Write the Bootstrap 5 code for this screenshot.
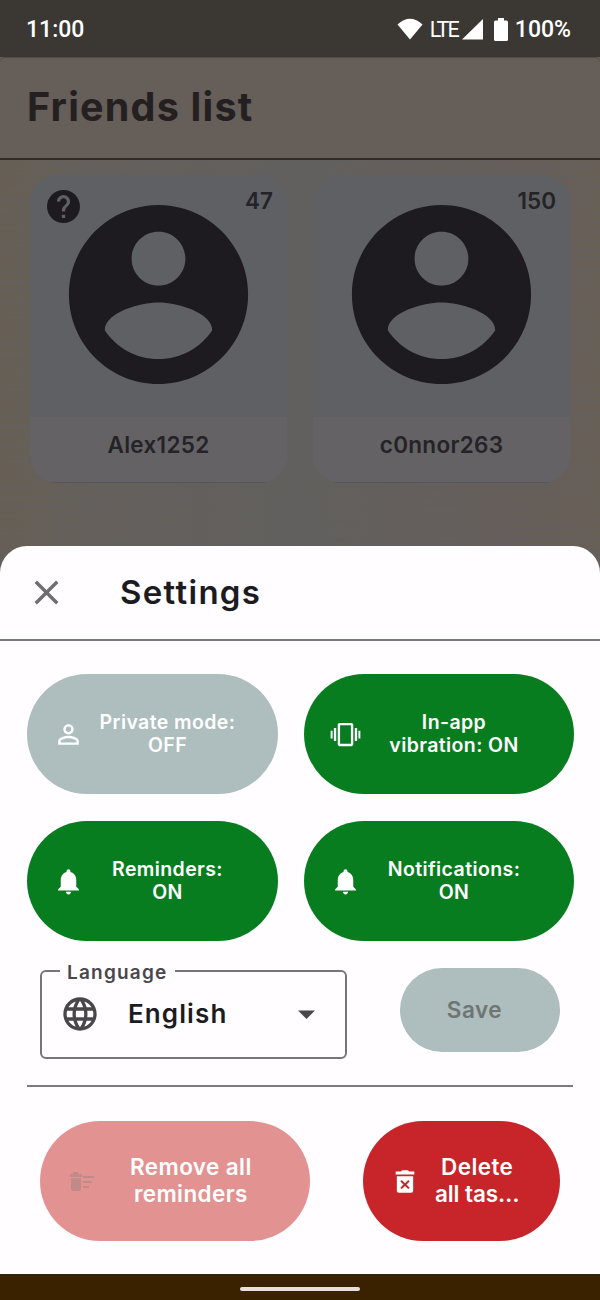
<!DOCTYPE html>
<html lang="en">
<head>
<meta charset="utf-8">
<meta name="viewport" content="width=device-width, initial-scale=1">
<title>Friends list – Settings</title>
<link href="https://cdn.jsdelivr.net/npm/bootstrap@5.3.0/dist/css/bootstrap.min.css" rel="stylesheet">
<style>
body{font-family:Inter,"Open Sans",sans-serif;font-weight:600;background:#665f59;color:#1c1b1f}
.screen{width:600px;height:1300px;overflow:hidden}
.screen svg{display:block;flex:none}
.statusbar{height:57px;background:#3b3833;color:#fff;font:500 23px/30px Roboto,sans-serif;padding:3px 29px 0 26px}
.lte{font-weight:400;font-size:21.5px;letter-spacing:-1.9px}
.wifi{margin-bottom:3px;margin-right:-1px}
.signal,.battery{margin-bottom:2px}
.battery{margin-left:11px;margin-right:7px}
.appbar{height:103px;padding:0 27px;background:#655e59;border-top:1px solid #514b47;border-bottom:2px solid #312c2a;border-radius:5px 5px 0 0}
.appbar h1{font-size:39.5px;font-weight:700;letter-spacing:1.2px;line-height:50px;color:#242021;margin:0 0 2px}
.friends{height:386px;padding:15px 30px 0;gap:26px;background:repeating-linear-gradient(179.5deg,#60616400 0 3px,#60616455 4px 5px,#60616400 6px 9px),linear-gradient(90deg,#675f55,#65605a 12%,#62605e 50%,#665e59 88%,#685f57)}
.friend{width:257px;height:308px;border-radius:27px;background:#5f6064;overflow:hidden;color:#242327;font-size:22.5px;line-height:28px}
.friend .top-line{height:30px;padding:12px 14px 0 17px}
.friend .top-line svg{margin-top:3px}
.friend .avatar{margin:-18px auto 0}
.friend .who{height:66px;background:#646265;padding-bottom:10px;letter-spacing:.3px;border-bottom:1px solid #55555c}
.sheet{height:728px;background:#fffdff;border-radius:27px 27px 0 0}
.sheet-head{height:95px;border-bottom:2px solid #7b7a7c;padding:0 0 1px 26px}
.sheet-head h2{font-size:33px;line-height:40px;font-weight:600;letter-spacing:1.3px;margin:0 0 1px 53px}
.opts{display:grid;grid-template-columns:251px 270px;gap:27px 26px;padding:33px 0 0 26.5px}
.pill{height:120px;border-radius:60px;border:0;color:#fff;display:flex;align-items:center;font-weight:600}
.opts .pill{font-size:19.5px;line-height:23.5px;letter-spacing:.4px;padding:0 26px 0 26px}
.opts .pill span{flex:1;text-align:center}
.green{background:#087d20}
.muted{background:#aebdbd}
.lang-row{padding:27px 40px 0;height:144px}
.lang{width:307px;height:92px;border:2px solid #777579;border-radius:6px;margin:-1px 0 0;padding:0 20px 5px 18px;color:#1c1b1f}
.lang legend{float:none;width:auto;margin:0;padding:0 8px 0 7px;font-size:19px;line-height:12px;height:8px;letter-spacing:1.2px;color:#49474b}
.lang .val{font-size:26px;letter-spacing:1.1px;margin-left:28px}
.lang .caret{margin-right:2px}
.save{width:160px;height:84px;border-radius:42px;color:#6e7574;font-size:22.5px;letter-spacing:.5px;padding:0 11px 1px 0;justify-content:center}
.rule{height:2px;background:#7b7a7c;margin:0 27px}
.danger-row{padding:34px 40px 0}
.danger-row .pill{font-size:22.5px;line-height:27px;letter-spacing:.4px;padding-bottom:0}
.danger-row .pill span{text-align:center;margin-bottom:4px}
.remove{width:270px;background:#e39292;padding-left:29px}
.remove span{margin-left:35px}
.delete{width:197px;background:#c72529;padding-left:28px}
.delete .label-text{margin-left:16px;white-space:nowrap}
.delete .tight{letter-spacing:-.1px}
.navbtm{height:26px;background:#3a2200;border-top:1px solid #292719}
.handle{width:120px;height:4px;border-radius:2px;background:#e8dedb;margin-top:3px}
</style>
</head>
<body>
<div class="screen d-flex flex-column">
  <div class="statusbar d-flex align-items-center">
    <span class="me-auto">11:00</span>
    <svg class="wifi" width="26" height="22" viewBox="0 0 26 22" fill="#fff"><path d="M0.500 6.500Q13-5 25.500 6.500L13 21.500z"/></svg>
    <span class="lte ms-2">LTE</span>
    <svg class="signal ms-1" width="21" height="22" viewBox="0 0 21 22"><path d="M0 21.500 21 1V21.500z" fill="#fff"/></svg>
    <svg class="battery" width="14" height="23" viewBox="0 0 14 23" fill="#fff"><path d="M4 0h6v2.500h2.500a1.500 1.500 0 0 1 1.500 1.500v17.500a1.500 1.500 0 0 1-1.500 1.500h-11A1.500 1.500 0 0 1 0 21.500V4a1.500 1.500 0 0 1 1.500-1.500H4z"/></svg>
    <span>100%</span>
  </div>
  <header class="appbar d-flex align-items-center"><h1>Friends list</h1></header>
  <main class="friends d-flex align-items-start">
    <div class="friend d-flex flex-column">
      <div class="top-line d-flex justify-content-between align-items-start">
        <svg width="33" height="33" viewBox="2 2 20 20" fill="#1d1b20"><path d="M12 2C6.480 2 2 6.480 2 12s4.480 10 10 10 10-4.480 10-10S17.520 2 12 2zm1 17h-2v-2h2v2zm2.070-7.750-.9.920C13.450 12.900 13 13.500 13 15h-2v-.5c0-1.100.450-2.100 1.170-2.830l1.240-1.260c.370-.360.590-.860.590-1.410 0-1.100-.9-2-2-2s-2 .9-2 2H8c0-2.210 1.790-4 4-4s4 1.790 4 4c0 .880-.360 1.680-.930 2.250z"/></svg>
        <span>47</span>
      </div>
      <svg class="avatar" width="215" height="215" viewBox="0 0 24 24" fill="#1d1b20"><path d="M12 2C6.480 2 2 6.480 2 12s4.480 10 10 10 10-4.480 10-10S17.520 2 12 2zm0 3c1.660 0 3 1.340 3 3s-1.340 3-3 3-3-1.340-3-3 1.340-3 3-3zm0 14.200c-2.500 0-4.710-1.280-6-3.220.030-1.990 4-3.080 6-3.080 1.990 0 5.970 1.090 6 3.080-1.290 1.940-3.500 3.220-6 3.220z"/></svg>
      <div class="who mt-auto d-flex align-items-center justify-content-center">Alex1252</div>
    </div>
    <div class="friend d-flex flex-column">
      <div class="top-line d-flex justify-content-end align-items-start"><span>150</span></div>
      <svg class="avatar" width="215" height="215" viewBox="0 0 24 24" fill="#1d1b20"><path d="M12 2C6.480 2 2 6.480 2 12s4.480 10 10 10 10-4.480 10-10S17.520 2 12 2zm0 3c1.660 0 3 1.340 3 3s-1.340 3-3 3-3-1.340-3-3 1.340-3 3-3zm0 14.200c-2.500 0-4.710-1.280-6-3.220.030-1.990 4-3.080 6-3.080 1.990 0 5.970 1.090 6 3.080-1.290 1.940-3.500 3.220-6 3.220z"/></svg>
      <div class="who mt-auto d-flex align-items-center justify-content-center">c0nnor263</div>
    </div>
  </main>
  <section class="sheet">
    <div class="sheet-head d-flex align-items-center">
      <svg width="41" height="41" viewBox="0 0 24 24" fill="#6f6d70"><path d="M19 6.410 17.590 5 12 10.590 6.410 5 5 6.410 10.590 12 5 17.590 6.410 19 12 13.410 17.590 19 19 17.590 13.410 12z"/></svg>
      <h2>Settings</h2>
    </div>
    <div class="opts">
      <button class="pill muted"><svg width="31" height="31" viewBox="0 0 24 24" fill="#fff"><path d="M12 5.900a2.100 2.100 0 1 1 0 4.200 2.100 2.100 0 0 1 0-4.200m0 9c2.970 0 6.100 1.460 6.100 2.100v1.100H5.900V17c0-.640 3.130-2.100 6.100-2.100M12 4C9.790 4 8 5.790 8 8s1.790 4 4 4 4-1.790 4-4-1.790-4-4-4zm0 9c-2.670 0-8 1.340-8 4v3h16v-3c0-2.660-5.330-4-8-4z"/></svg><span>Private mode:<br>OFF</span></button>
      <button class="pill green"><svg width="31" height="31" viewBox="0 0 24 24" fill="#fff"><path d="M.5 15H2V9H.5v6zm2.500 2h1.800V7H3v10zM22 9v6h1.500V9H22zm-2.800 8H21V7h-1.800v10zM16.500 3h-9C6.670 3 6 3.670 6 4.500v15c0 .830.670 1.500 1.500 1.500h9c.830 0 1.500-.670 1.500-1.500v-15c0-.830-.670-1.500-1.500-1.500zM16.200 19.200H7.800V4.800h8.400v14.400z"/></svg><span>In-app<br>vibration: ON</span></button>
      <button class="pill green"><svg width="31" height="31" viewBox="0 0 24 24" fill="#fff"><path d="M12 22c1.100 0 2-.9 2-2h-4c0 1.100.9 2 2 2zm6-6v-5c0-3.070-1.630-5.640-4.500-6.320V4c0-.830-.670-1.500-1.500-1.500s-1.500.670-1.500 1.500v.680C7.640 5.360 6 7.920 6 11v5l-2 2v1h16v-1l-2-2z"/></svg><span>Reminders:<br>ON</span></button>
      <button class="pill green"><svg width="31" height="31" viewBox="0 0 24 24" fill="#fff"><path d="M12 22c1.100 0 2-.9 2-2h-4c0 1.100.9 2 2 2zm6-6v-5c0-3.070-1.630-5.640-4.500-6.320V4c0-.830-.670-1.500-1.500-1.500s-1.500.670-1.500 1.500v.680C7.640 5.360 6 7.920 6 11v5l-2 2v1h16v-1l-2-2z"/></svg><span>Notifications:<br>ON</span></button>
    </div>
    <div class="lang-row d-flex justify-content-between align-items-start">
      <fieldset class="lang">
        <legend>Language</legend>
        <div class="d-flex align-items-center h-100">
          <svg width="40" height="40" viewBox="0 0 24 24" fill="#49474b"><path d="M11.990 2C6.470 2 2 6.480 2 12s4.470 10 9.990 10C17.520 22 22 17.520 22 12S17.520 2 11.990 2zm6.930 6h-2.950c-.320-1.250-.780-2.450-1.380-3.560 1.840.630 3.370 1.910 4.330 3.560zM12 4.040c.830 1.200 1.480 2.530 1.910 3.960h-3.820c.430-1.430 1.080-2.760 1.910-3.960zM4.260 14C4.100 13.360 4 12.690 4 12s.1-1.360.260-2h3.380c-.080.660-.140 1.320-.140 2s.060 1.340.140 2H4.260zm.820 2h2.950c.320 1.250.780 2.450 1.380 3.560-1.840-.630-3.370-1.900-4.330-3.560zm2.950-8H5.080c.960-1.660 2.490-2.930 4.330-3.560C8.810 5.550 8.350 6.750 8.030 8zM12 19.960c-.830-1.200-1.480-2.530-1.910-3.960h3.820c-.430 1.430-1.080 2.760-1.910 3.960zM14.340 14H9.660c-.090-.660-.160-1.320-.160-2s.070-1.350.160-2h4.680c.090.650.160 1.320.160 2s-.070 1.340-.160 2zm.250 5.560c.600-1.110 1.060-2.310 1.380-3.560h2.950c-.960 1.650-2.490 2.930-4.330 3.560zM16.360 14c.080-.660.140-1.320.140-2s-.060-1.340-.140-2h3.380c.160.640.260 1.310.260 2s-.1 1.360-.260 2h-3.380z"/></svg>
          <span class="val">English</span>
          <svg class="caret ms-auto" width="34" height="40" viewBox="0 0 34 40" fill="#49474b"><path d="M9 16.500h17l-8.500 8.500z"/></svg>
        </div>
      </fieldset>
      <button class="pill save muted">Save</button>
    </div>
    <div class="rule"></div>
    <div class="danger-row d-flex justify-content-between">
      <button class="pill remove"><svg width="26" height="26" viewBox="0 0 26 26" fill="#c08a88"><path d="M1 5h3V3h5v2h4v3H1zM2 9h10v11a2 2 0 0 1-2 2H4a2 2 0 0 1-2-2zM14 7h11v2H14zM14 12h9v2h-9zM14 17h6v2h-6z"/></svg><span>Remove all<br>reminders</span></button>
      <button class="pill delete"><svg width="28" height="28" viewBox="0 0 24 24" fill="#fff"><path fill-rule="evenodd" d="M5 7h14v12.500c0 1-.8 1.700-1.700 1.700H6.700C5.800 21.200 5 20.500 5 19.500zM9.200 10.300 8 11.500l2.700 2.700L8 16.900l1.200 1.200 2.800-2.700 2.800 2.700 1.200-1.200-2.700-2.700 2.700-2.700-1.200-1.200-2.800 2.700zM15.500 3l-1-1h-5l-1 1H4v2.500h16V3z"/></svg><span class="label-text">Delete<br><span class="tight">all tas…</span></span></button>
    </div>
  </section>
  <footer class="navbtm d-flex justify-content-center align-items-center"><div class="handle"></div></footer>
</div>
<script src="https://cdn.jsdelivr.net/npm/bootstrap@5.3.0/dist/js/bootstrap.bundle.min.js"></script>
</body>
</html>
